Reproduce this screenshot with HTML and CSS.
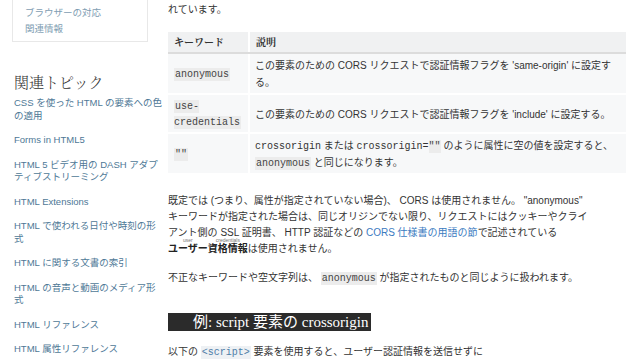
FILE: index.html
```html
<!DOCTYPE html>
<html lang="ja">
<head>
<meta charset="utf-8">
<title>crossorigin</title>
<link rel="stylesheet" href="styles.css">
</head>
<body>
<div class="page">
  <aside class="side">
    <div class="toc">
      <a href="#">ブラウザーの対応</a>
      <a href="#">関連情報</a>
    </div>
    <h2 class="side-title">関連トピック</h2>
    <ul class="topics">
      <li><a href="#">CSS を使った HTML の要素への色<br>の適用</a></li>
      <li><a href="#">Forms in HTML5</a></li>
      <li><a href="#">HTML 5 ビデオ用の DASH アダプ<br>ティブストリーミング</a></li>
      <li><a href="#">HTML Extensions</a></li>
      <li><a href="#">HTML で使われる日付や時刻の形<br>式</a></li>
      <li><a href="#">HTML に関する文書の索引</a></li>
      <li><a href="#">HTML の音声と動画のメディア形<br>式</a></li>
      <li><a href="#">HTML リファレンス</a></li>
      <li><a href="#">HTML 属性リファレンス</a></li>
    </ul>
  </aside>
  <main class="content">
    <p class="lead">れています。</p>
    <table class="kw">
      <thead>
        <tr><th class="c1">キーワード</th><th>説明</th></tr>
      </thead>
      <tbody>
        <tr><td class="c1"><code>anonymous</code></td><td>この要素のための CORS リクエストで認証情報フラグを 'same-origin' に設定す<br>る。</td></tr>
        <tr><td class="c1"><code>use-credentials</code></td><td>この要素のための CORS リクエストで認証情報フラグを 'include' に設定する。</td></tr>
        <tr><td class="c1"><code>""</code></td><td><span class="mono">crossorigin</span> または <span class="mono">crossorigin=<code>""</code></span> のように属性に空の値を設定すると、<br><code>anonymous</code> と同じになります。</td></tr>
      </tbody>
    </table>
    <p class="para">既定では (つまり、属性が指定されていない場合)、 CORS は使用されません。 "anonymous"<br>キーワードが指定された場合は、同じオリジンでない限り、リクエストにはクッキーやクライ<br>アント側の SSL 証明書、 HTTP 認証などの <a href="#" class="link">CORS 仕様書の用語の節</a>で記述されている<br><strong><ruby>ユーザー<rt>user</rt></ruby><ruby>資格情報<rt>credentials</rt></ruby></strong>は使用されません。</p>
    <p class="para2">不正なキーワードや空文字列は、 <code>anonymous</code> が指定されたものと同じように扱われます。</p>
    <h3 class="example"><span>例: script 要素の crossorigin</span></h3>
    <p class="para3">以下の <code class="tag">&lt;script&gt;</code> 要素を使用すると、ユーザー認証情報を送信せずに</p>
  </main>
</div>
</body>
</html>
```
FILE: styles.css
```css
* { box-sizing: border-box; }
html, body { margin: 0; padding: 0; background: #fff; }
body {
  font-family: "Liberation Sans", "Noto Sans CJK JP", sans-serif;
  font-size: 10px;
  color: #333;
  overflow: hidden;
  height: 360px;
}
.page {
  display: flex;
  align-items: flex-start;
}
.side {
  width: 148px;
  padding-left: 12px;
  flex: none;
}
.toc {
  border: 1px solid #e8e8e8;
  border-top: none;
  padding: 5px 12px 4px;
  display: flex;
  flex-direction: column;
}
.toc a {
  color: #7e9db2;
  text-decoration: none;
  font-size: 9.5px;
  line-height: 16px;
}
.side-title {
  margin: 30px 0 0 2px;
  font-family: "Noto Serif CJK JP", "Liberation Serif", "Noto Sans CJK JP", serif;
  font-weight: 300;
  font-size: 15px;
  line-height: 20px;
  color: #333;
}
.topics {
  list-style: none;
  margin: 5px 0 0;
  padding: 0 0 0 2px;
  display: flex;
  flex-direction: column;
  gap: 12px;
  white-space: nowrap;
}
.topics a {
  color: #4e7896;
  text-decoration: none;
  font-size: 9.5px;
  line-height: 12.5px;
  display: block;
}
.content {
  margin-left: 20px;
  width: 458px;
  flex: none;
}
.lead {
  margin: 0;
  padding-top: 2px;
  line-height: 16px;
}
code, .mono {
  font-family: "Liberation Mono", "DejaVu Sans Mono", monospace;
  font-size: 10px;
  line-height: 10px;
}
code {
  background: #ececec;
  padding: 1px 1px;
  color: #444;
}
.mono code { padding: 1px 0; }
.kw {
  margin-top: 14px;
  width: 458px;
  border-collapse: collapse;
  background: #f7f8f9;
}
.kw th {
  background: #f0f1f2;
  text-align: left;
  font-family: "Noto Serif CJK JP", "Liberation Serif", "Noto Sans CJK JP", serif;
  font-weight: 700;
  font-size: 10px;
  line-height: 17px;
  padding: 1px 5px 2px 6px;
  border-right: 2px solid #fff;
  border-bottom: 2px solid #dcdcdc;
}
.kw th:last-child, .kw td:last-child { border-right: none; }
.kw td {
  line-height: 17px;
  padding: 3px 5px 2px 5px;
  border-right: 2px solid #fff;
  border-bottom: 2px solid #fff;
  vertical-align: middle;
}
.kw .c1 { width: 81px; padding-left: 6px; }
.kw td.c1 { line-height: 16px; }
.para {
  margin: 18px 0 0;
  line-height: 16px;
}
.para strong { font-weight: 700; color: #222; }
ruby rt {
  font-size: 5px;
  font-weight: 400;
  color: #777;
  line-height: 5px;
}
.link { color: #3b7bbf; text-decoration: none; }
.para2 {
  margin: 13px 0 0;
  line-height: 16px;
}
.example {
  margin: 27px 0 0;
  font-family: "Liberation Serif", "Noto Sans CJK JP", serif;
  font-weight: 400;
  font-size: 15px;
  line-height: 18px;
}
.example span {
  display: inline-block;
  background: #2b2b2b;
  color: #fff;
  padding: 0 3px 0 25px;
}
.para3 {
  margin: 13px 0 0;
  line-height: 16px;
}
code.tag { color: #4f7ea8; background: #eef1f4; }
```
